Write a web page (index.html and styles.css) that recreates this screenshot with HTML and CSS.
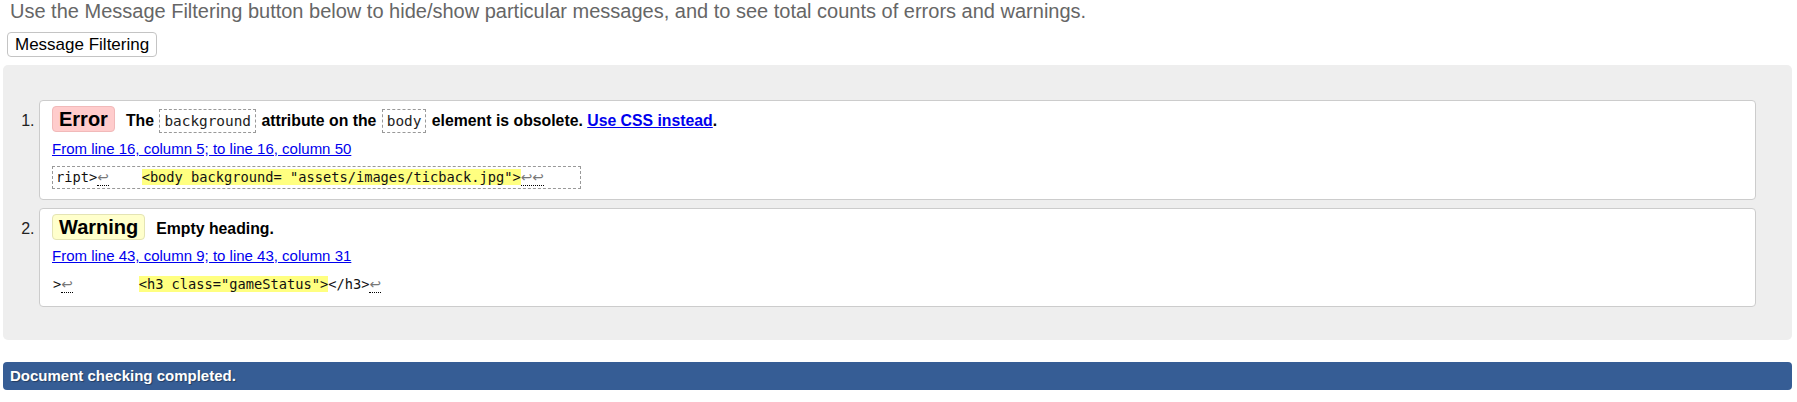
FILE: index.html
```html
<!DOCTYPE html>
<html lang="en">
<head>
<meta charset="utf-8">
<title>Validator results</title>
<link rel="stylesheet" href="styles.css">
</head>
<body>
<p class="intro">Use the Message Filtering button below to hide/show particular messages, and to see total counts of errors and warnings.</p>
<button class="filter-btn" type="button">Message Filtering</button>
<div class="results">
  <ol class="messages">
    <li class="msg">
      <p class="msg-head"><span class="badge badge-error">Error</span>The <code class="ref">background</code> attribute on the <code class="ref">body</code> element is obsolete. <a href="#" class="msg-link">Use CSS instead</a>.</p>
      <p class="location"><a href="#">From line 16, column 5; to line 16, column 50</a></p>
      <div class="extract"><code class="snippet">ript&gt;<span class="lf">↩</span>    <mark>&lt;body background= "assets/images/ticback.jpg"&gt;</mark><span class="lf">↩↩</span>    </code></div>
    </li>
    <li class="msg">
      <p class="msg-head"><span class="badge badge-warning">Warning</span>Empty heading.</p>
      <p class="location"><a href="#">From line 43, column 9; to line 43, column 31</a></p>
      <div class="extract"><code class="snippet snippet-plain">&gt;<span class="lf">↩</span>        <mark>&lt;h3 class="gameStatus"&gt;</mark>&lt;/h3&gt;<span class="lf">↩</span></code></div>
    </li>
  </ol>
</div>
<p class="status">Document checking completed.</p>
</body>
</html>
```

FILE: styles.css
```css
* {
  box-sizing: border-box;
}

body {
  margin: 0;
  padding: 0 5px 0 3px;
  font-family: "Liberation Sans", Arial, sans-serif;
  color: #000;
  background: #fff;
}

.intro {
  margin: 0 0 0 7px;
  font-size: 20px;
  line-height: 22px;
  color: #666;
}

.filter-btn {
  display: block;
  margin: 10px 0 0 4px;
  padding: 1px 7px;
  font: 17px/21px "Liberation Sans", Arial, sans-serif;
  color: #000;
  background: #fff;
  border: 1px solid #c4c4c4;
  border-radius: 4px;
}

.results {
  margin-top: 8px;
  padding: 35px 36px 33px 36px;
  background: #eee;
  border-radius: 5px;
}

.messages {
  margin: 0;
  padding: 0;
  font-size: 16px;
  color: #222;
}

.msg {
  background: #fff;
  border: 1px solid #ccc;
  border-radius: 4px;
  padding: 5px 12px 10px;
}

.msg + .msg {
  margin-top: 8px;
}

.msg-head {
  margin: 0;
  font-size: 15.8px;
  line-height: 18px;
  font-weight: bold;
  color: #000;
}

.badge {
  display: inline-block;
  margin-right: 11px;
  padding: 1px 6px;
  border: 1px solid;
  border-radius: 4px;
  font-size: 20px;
  line-height: 22px;
}

.badge-error {
  background: #fcc;
  border-color: #f1b9b9;
}

.badge-warning {
  background: #ffc;
  border-color: #e4e4b4;
}

.ref {
  display: inline-block;
  margin: 0 1px;
  padding: 2px 4px;
  border: 1px dashed #999;
  font: normal 14.4px/18px "DejaVu Sans Mono", monospace;
  color: #222;
}

.msg-link {
  color: #0000ee;
}

.location {
  margin: 7px 0 0;
  font-size: 15px;
  line-height: 18px;
}

.location a {
  color: #0000ee;
}

.extract {
  display: flex;
  margin-top: 8px;
}

.snippet {
  display: block;
  padding: 0 3px;
  border: 1px dashed #999;
  font: 13.7px/21px "DejaVu Sans Mono", monospace;
  white-space: pre;
  color: #111;
}

.snippet-plain {
  border-color: transparent;
  padding-left: 0;
}

.snippet mark {
  background: #ffff80;
  color: inherit;
}

.lf {
  font-family: "DejaVu Sans", sans-serif;
  color: #777;
  border-bottom: 1px dotted #000;
}

.status {
  margin: 22px 0 0;
  padding: 5px 7px;
  background: #365d95;
  color: #fff;
  font-size: 15px;
  line-height: 18px;
  font-weight: bold;
  border-radius: 4px;
  text-shadow: 1px 1px 1px rgba(0, 0, 0, 0.35);
}
```
